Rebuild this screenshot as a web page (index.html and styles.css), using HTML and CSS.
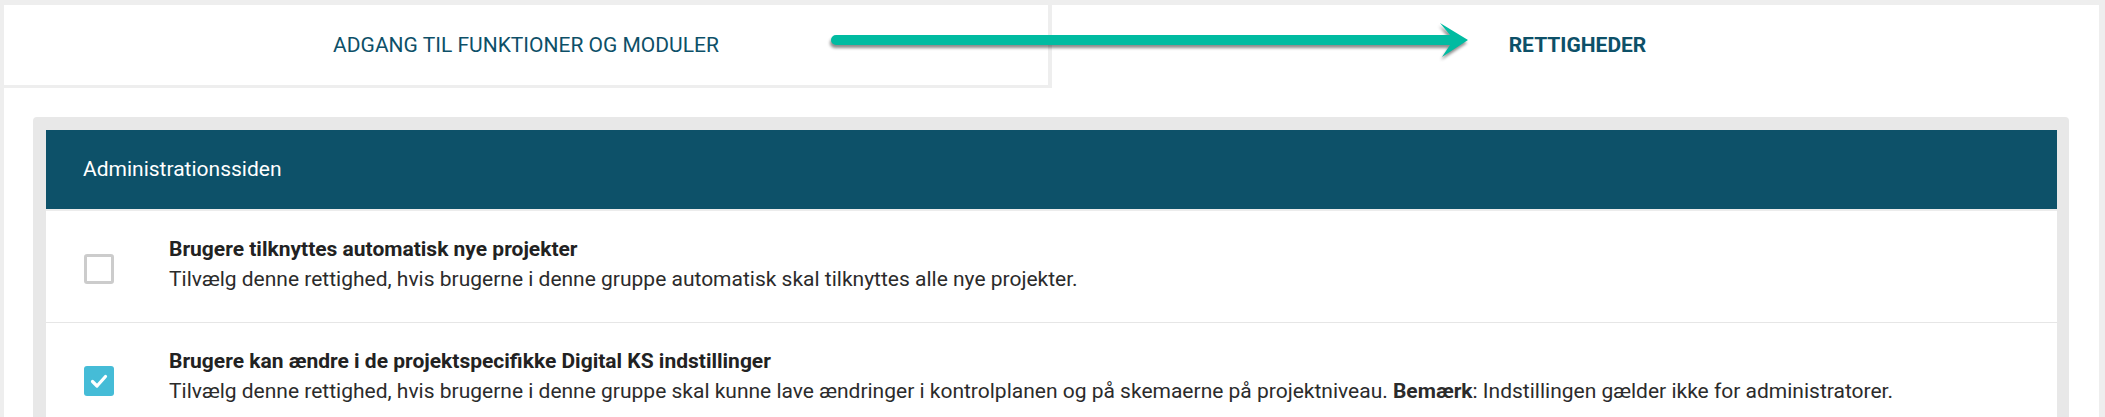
FILE: index.html
```html
<!DOCTYPE html>
<html lang="da">
<head>
<meta charset="utf-8">
<title>Rettigheder</title>
<link rel="stylesheet" href="styles.css">
</head>
<body>
<div class="page">
  <div class="tabs">
    <div class="tab tab-inactive">ADGANG TIL FUNKTIONER OG MODULER</div>
    <div class="tab tab-active">RETTIGHEDER</div>
    <svg class="arrow" width="660" height="50" viewBox="0 0 660 50" aria-hidden="true">
      <path d="M10 17 L624 17 L614 5 L642 22 L616 39 L624 27 L10 27 A5 5 0 0 1 10 17 Z" fill="#00bba1"/>
    </svg>
  </div>
  <div class="content">
    <div class="panel">
      <div class="panel-header">Administrationssiden</div>
      <div class="row">
        <span class="checkbox"></span>
        <div class="row-text">
          <div class="row-title">Brugere tilknyttes automatisk nye projekter</div>
          <div class="row-desc">Tilvælg denne rettighed, hvis brugerne i denne gruppe automatisk skal tilknyttes alle nye projekter.</div>
        </div>
      </div>
      <div class="row">
        <span class="checkbox checked">
          <svg width="30" height="30" viewBox="0 0 30 30"><path d="M8.5 15.5 L13 20 L21.5 10.5" fill="none" stroke="#fff" stroke-width="3.2" stroke-linecap="round" stroke-linejoin="round"/></svg>
        </span>
        <div class="row-text">
          <div class="row-title">Brugere kan ændre i de projektspecifikke Digital KS indstillinger</div>
          <div class="row-desc">Tilvælg denne rettighed, hvis brugerne i denne gruppe skal kunne lave ændringer i kontrolplanen og på skemaerne på projektniveau. <b>Bemærk</b>: Indstillingen gælder ikke for administratorer.</div>
        </div>
      </div>
    </div>
  </div>
</div>
</body>
</html>
```

FILE: styles.css
```css
* { box-sizing: border-box; }

html, body {
  margin: 0;
  height: 100%;
}

body {
  background: #eeeeee;
  padding: 5px 6px 0 4px;
  font-family: Roboto, "Liberation Sans", Arial, sans-serif;
  overflow: hidden;
}

.page {
  background: #ffffff;
  min-height: 100%;
}

.tabs {
  position: relative;
  display: flex;
}

.tab {
  height: 83px;
  display: flex;
  align-items: center;
  justify-content: center;
  font-size: 21px;
  color: #0d5068;
  padding-bottom: 3px;
}

.tab-inactive {
  width: 1048px;
  border-right: 4px solid #eeeeee;
  border-bottom: 3px solid #eeeeee;
  padding-bottom: 0;
}

.tab-active {
  flex: 1;
  font-weight: 700;
  padding-left: 4px;
}

.arrow {
  position: absolute;
  left: 822px;
  top: 13px;
  filter: drop-shadow(-1px 3px 1.5px rgba(0, 0, 0, 0.45));
}

.content {
  padding: 29px 30px 0 29px;
}

.panel {
  background: #e8e8e8;
  border-radius: 4px;
  padding: 13px 12px 0 13px;
}

.panel-header {
  height: 81px;
  background: #0d5169;
  color: #ffffff;
  font-size: 21px;
  display: flex;
  align-items: center;
  padding-left: 37px;
  padding-bottom: 2px;
  border-bottom: 2px solid #ececec;
}

.row {
  background: #ffffff;
  display: flex;
  align-items: flex-start;
  padding: 23px 20px 28px 38px;
  border-bottom: 1px solid #e6e6e6;
}

.checkbox {
  flex: none;
  width: 30px;
  height: 30px;
  margin-top: 20px;
  margin-right: 55px;
  border: 3px solid #cccccc;
  border-radius: 3px;
  background: #ffffff;
  display: flex;
}

.checkbox.checked {
  border: none;
  background: #45bcd7;
}

.row-text {
  font-size: 21px;
  line-height: 30px;
  color: #2b2b2b;
}

.row-title {
  font-weight: 700;
  color: #222222;
}

.row-desc b {
  font-weight: 700;
}
```
